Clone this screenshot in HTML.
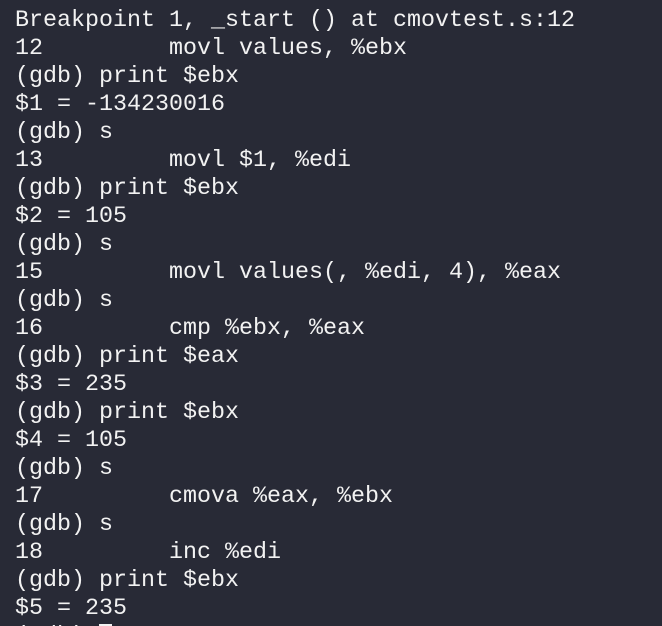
<!DOCTYPE html>
<html><head><meta charset="utf-8"><style>
html,body{margin:0;padding:0;background:#282a36;width:662px;height:626px;overflow:hidden}
#w{position:relative;width:662px;height:626px;overflow:hidden;background:#282a36}
pre{margin:0;position:absolute;left:15px;top:7px;font-family:"Liberation Mono",monospace;font-size:23.33px;line-height:28px;color:#f2f2f2}
.cur{display:inline-block;width:13px;height:22px;background:#f2f2f2;vertical-align:-4px}
</style></head><body><div id="w"><pre>Breakpoint 1, _start () at cmovtest.s:12
12         movl values, %ebx
(gdb) print $ebx
$1 = -134230016
(gdb) s
13         movl $1, %edi
(gdb) print $ebx
$2 = 105
(gdb) s
15         movl values(, %edi, 4), %eax
(gdb) s
16         cmp %ebx, %eax
(gdb) print $eax
$3 = 235
(gdb) print $ebx
$4 = 105
(gdb) s
17         cmova %eax, %ebx
(gdb) s
18         inc %edi
(gdb) print $ebx
$5 = 235
(gdb) <span class="cur"></span></pre></div></body></html>
